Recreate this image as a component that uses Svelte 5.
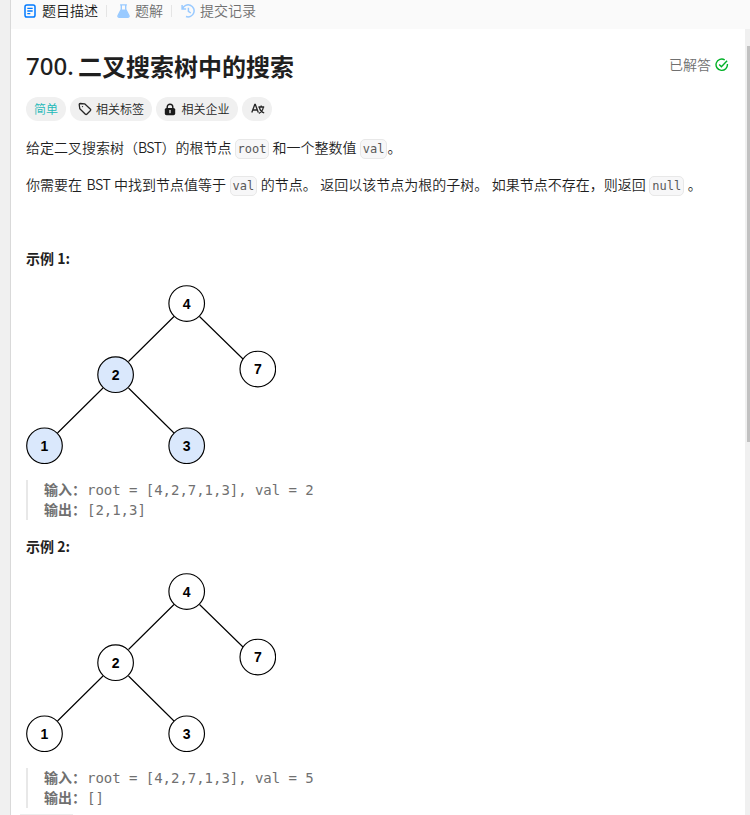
<script>
  const nodes = [
    { v: 4, x: 160.7, y: 18.5 },
    { v: 2, x: 89.6, y: 89.7 },
    { v: 7, x: 231.8, y: 84 },
    { v: 1, x: 18.5, y: 160.8 },
    { v: 3, x: 160.7, y: 160.8 },
  ];
  const examples = [
    { id: 1, val: 2, out: '[2,1,3]', marked: [2, 1, 3] },
    { id: 2, val: 5, out: '[]', marked: [] },
  ];
</script>

{#snippet tree(marked)}
  <svg class="tree" width="250" height="179" viewBox="0 0 250 179">
    <g stroke="#000" stroke-width="1.15">
      <path d="M148 31.5 102.5 76.5M173.5 31.5 217 74M77 103 31.5 148M102.5 103 148 148" fill="none" />
      {#each nodes as n}
        <circle cx={n.x} cy={n.y} r="17.8" fill={marked.includes(n.v) ? '#dae8fc' : '#fff'} />
      {/each}
    </g>
    {#each nodes as n}
      <text x={n.x} y={n.y + 5} text-anchor="middle">{n.v}</text>
    {/each}
  </svg>
{/snippet}

<div class="page">
  <div class="panel">
    <nav>
      <div class="tab active">
        <svg width="12" height="14" viewBox="0 0 12 14" fill="none" stroke="#007aff" stroke-width="1.5"><rect x="1" y=".9" width="10" height="12.2" rx="1.8" /><path d="M3.3 4.3h5.4M3.3 7h5.4M3.3 9.7h3" stroke-width="1.3" /></svg>
        <span>题目描述</span>
      </div>
      <i></i>
      <div class="tab second">
        <svg width="13" height="14" viewBox="0 0 13 14"><path d="M3.1.9h6.8M4.3 1v4.4L1.2 11.2Q.3 13.2 2.3 13.2h8.4q2 0 1.1-2L8.7 5.4V1" fill="none" stroke="#99caff" stroke-width="1.4" /><path d="M4.3 5.5h4.4l3.1 6.3q.2 1.2-1.1 1.2H2.3q-1.3 0-1.1-1.2z" fill="#99caff" /></svg>
        <span>题解</span>
      </div>
      <i></i>
      <div class="tab third">
        <svg width="15" height="14" viewBox="0 0 15 14" fill="none" stroke="#99caff" stroke-width="1.5"><path d="M1.1 1v4h4M1.5 4.7A6 6 0 1 1 5 12.5M7.4 3.7v3.6l2.4 1.7" /></svg>
        <span>提交记录</span>
      </div>
    </nav>
    <div class="body">
      <main>
        <header>
          <h1><span>700.</span>二叉搜索树中的搜索</h1>
          <div class="solved">
            <span>已解答</span>
            <svg width="14" height="14" viewBox="0 0 14 14" fill="none" stroke="#02b128" stroke-width="1.4"><path d="M9.7 1.8A5.7 5.7 0 1 0 12.4 6M4.2 6.6l2.2 2.2 5.7-6" /></svg>
          </div>
        </header>
        <div class="tags">
          <div class="tag easy">简单</div>
          <div class="tag topics">
            <svg width="14" height="14" viewBox="0 0 14 14" fill="none" stroke="#262626" stroke-width="1.3"><path d="M1.2 2.5Q1.2 1.5 2.2 1.5L6.6 1.8 12.5 7.2Q13 7.9 12.5 8.5L8.8 12.2Q8.1 12.8 7.4 12.2L1.8 6.8Z" stroke-linejoin="round" /><circle cx="4.5" cy="4.6" r=".7" fill="#262626" stroke="none" /></svg>
            <span>相关标签</span>
          </div>
          <div class="tag firms">
            <svg width="12" height="13" viewBox="0 0 12 13"><path d="M3.2 6V4a2.8 2.8 0 0 1 5.6 0v2" fill="none" stroke="#1a1a1a" stroke-width="1.4" /><rect x=".8" y="4.9" width="10.4" height="7.4" rx="1.7" fill="#1a1a1a" /><path d="M6 7.5v2.2" stroke="#efefef" stroke-width="1.3" stroke-linecap="round" /></svg>
            <span>相关企业</span>
          </div>
          <div class="tag lang">
            <svg width="14" height="12" viewBox="0 0 14 12" fill="none" stroke="#262626" stroke-width="1.3"><path d="M.8 9.5 3.8 1.5h.5l3 8M1.9 7h4.5M7.4 4h5.8M10.2 2.5V4M8.4 4.5Q9.3 8.6 13.2 10M12.3 4.5Q11.5 8.7 7.8 10.3" /></svg>
          </div>
        </div>
        <p class="first">给定二叉搜索树（<span class="tight">BST</span>）的根节点 <code>root</code> 和一个整数值 <code>val</code>。</p>
        <p class="next">你需要在 <span class="bst">BST</span> 中找到节点值等于 <code>val</code> 的节点。 返回以该节点为根的子树。 如果节点不存在，则返回 <code>null</code> 。</p>
        {#each examples as e}
          <section>
            <h2>示例 {e.id}:</h2>
            {@render tree(e.marked)}
            <div class="io">
              <div><b>输入：</b><span>root = [4,2,7,1,3], val = {e.val}</span></div>
              <div><b>输出：</b><span>{e.out}</span></div>
            </div>
          </section>
        {/each}
      </main>
      <div class="track"><div class="thumb"></div></div>
    </div>
    <div class="pill"></div>
  </div>
</div>

<style>
  :global(body) { background: #f0f0f0; overflow: hidden; }
  .page {
    height: 815px; box-sizing: border-box; padding-left: 10px; overflow: hidden;
    font: 350 14px/20px "Noto Sans CJK SC", sans-serif; color: #1f1f1f;
  }
  .panel { height: 815px; box-sizing: border-box; border-left: 1px solid #d9d9d9; background: #fff; display: flex; flex-direction: column; position: relative; }
  nav { height: 29px; flex: none; background: #fafafa; display: flex; box-sizing: border-box; padding: 0 0 7px 13px; align-items: center; white-space: nowrap; }
  .tab { display: flex; align-items: center; color: #707070; }
  .tab span { margin-top: -2px; }
  .active { color: #1a1a1a; gap: 6px; width: 82px; }
  .second { gap: 5px; width: 54px; }
  .third { gap: 4px; }
  nav i { width: 1px; height: 12px; background: #e5e5e5; margin: 0 10px 0 0; }
  nav i + .third { margin-left: -1px; }
  .body { flex: 1; display: flex; min-height: 0; }
  main { flex: 1; padding: 19px 16px 0 15px; white-space: nowrap; min-width: 0; }
  header { display: flex; justify-content: space-between; height: 36px; }
  h1 { margin: 0; font-size: 24px; line-height: 36px; font-weight: 700; display: flex; }
  h1 span { font-family: "Noto Sans", sans-serif; font-weight: 500; width: 52px; }
  .solved { display: flex; align-items: center; gap: 4px; color: #707070; height: 34px; }
  .solved span { margin-top: -2px; }
  .tags { display: flex; gap: 4px; margin-top: 13px; height: 24px; }
  .tag { height: 24px; box-sizing: border-box; border-radius: 12px; background: #f0f0f0; display: flex; align-items: center; justify-content: center; font-size: 12px; gap: 4px; }
  .easy { width: 40px; color: #1cb8b8; }
  .topics { width: 82px; }
  .firms { width: 82px; gap: 5px; }
  .lang { width: 30px; padding-left: 1px; }
  p { margin: 16px 0 0; height: 21px; line-height: 21px; }
  .tight { letter-spacing: -.6px; }
  .bst { margin-left: 1px; letter-spacing: -.4px; }
  code { display: inline-block; box-sizing: border-box; height: 20px; border: 1px solid #e8e8e8; border-radius: 5px; background: #f7f7f8; padding: 0 2px; color: #595959; font: 12px/18px "DejaVu Sans Mono", monospace; }
  .next { word-spacing: .4px; }
  section { height: 288px; }
  .next + section { margin-top: 53px; }
  h2 { margin: 0; font-size: 14px; line-height: 21px; font-weight: 700; }
  .tree { display: block; margin-top: 16px; }
  .tree text { font: bold 14px "Liberation Sans", sans-serif; fill: #000; }
  .io { border-left: 2px solid #e8e8e8; margin-top: 16px; padding-left: 16px; height: 40px; color: #707070; font: 14px/20px "DejaVu Sans Mono", "Noto Sans CJK SC", monospace; letter-spacing: -.03px; }
  .io div { height: 20px; display: flex; }
  .io b { width: 43px; flex: none; font-family: "Noto Sans CJK SC", sans-serif; margin-top: -1px; }
  .track { width: 5px; flex: none; background: #f0f0f0; padding: 17px 0 0 2px; box-sizing: border-box; }
  .thumb { height: 396px; background: #c1c1c1; }
  .pill { position: absolute; left: 9px; bottom: 0; width: 53px; height: 1px; background: #ececec; }
</style>
